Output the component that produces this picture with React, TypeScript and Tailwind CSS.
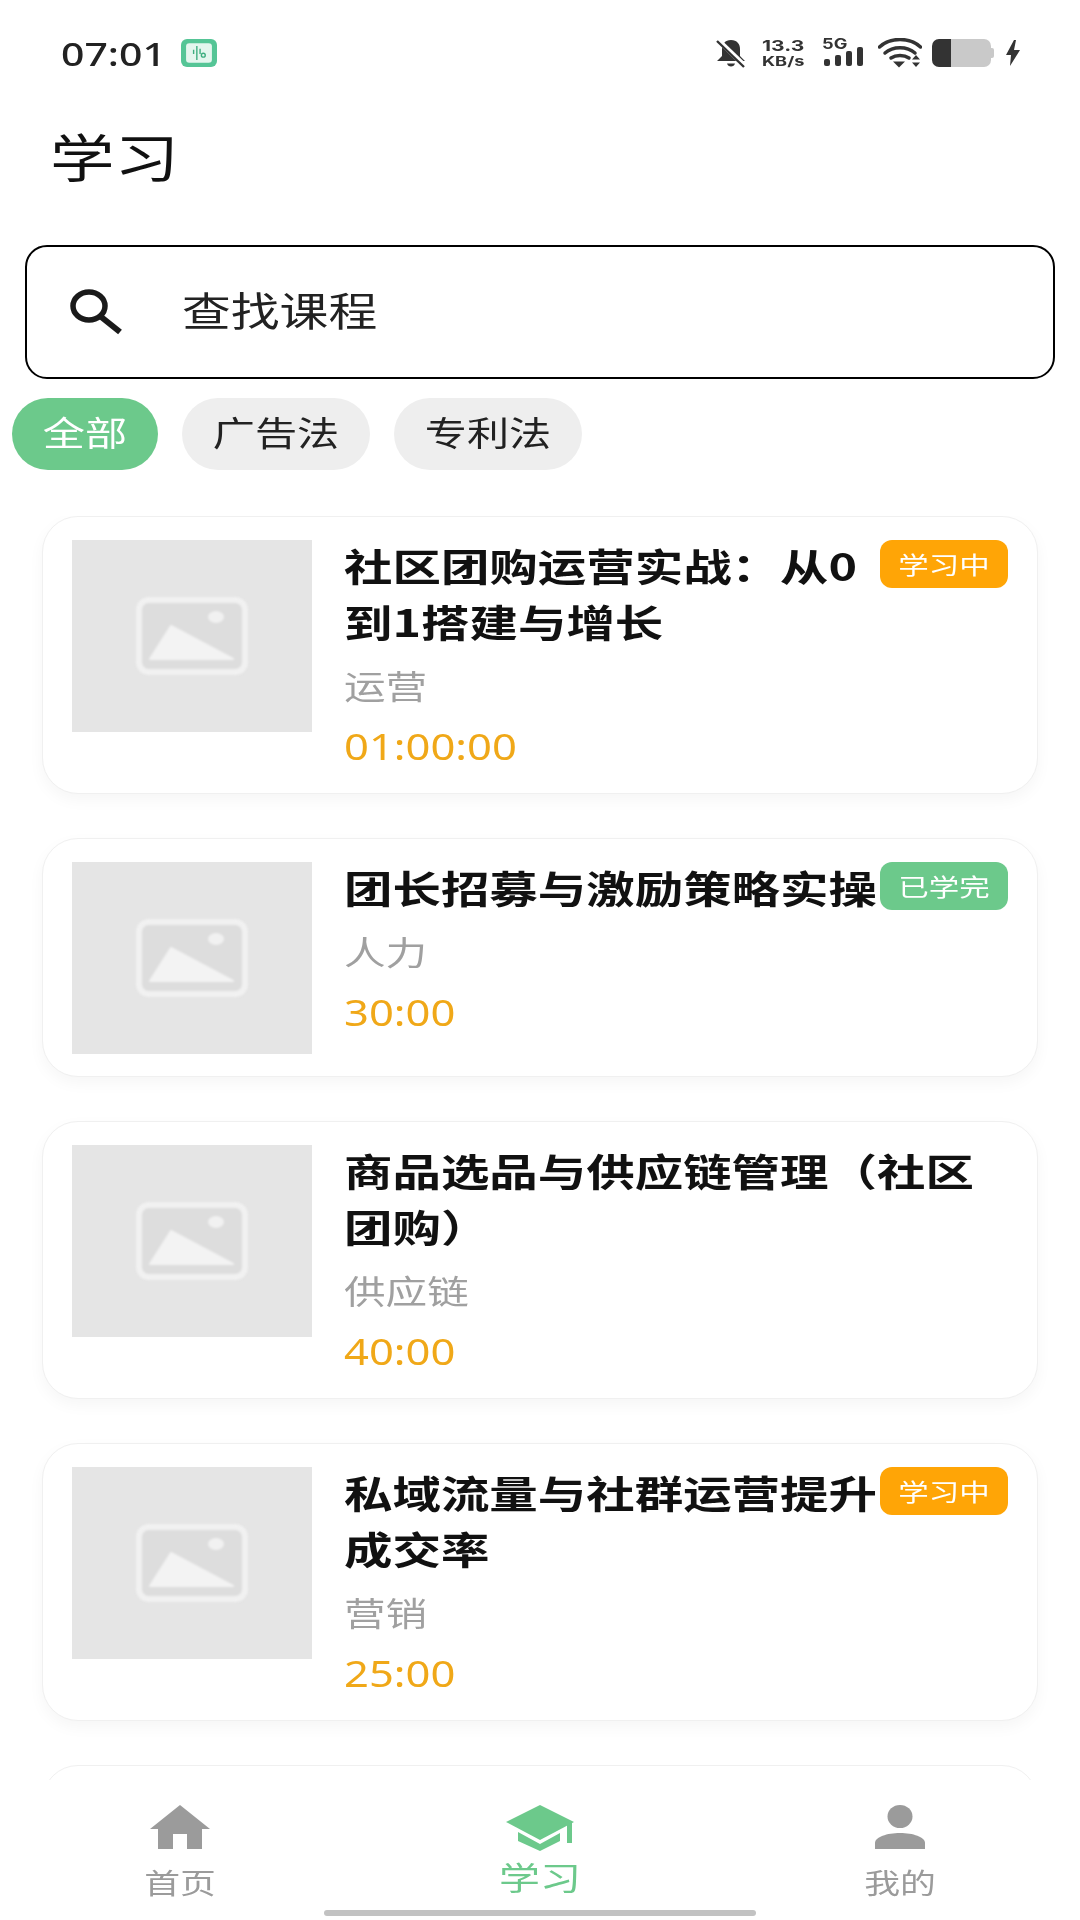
const courses = [
  { title: ["社区团购运营实战：从0", "到1搭建与增长"], category: "运营", time: "01:00:00", status: "学习中" },
  { title: ["团长招募与激励策略实操"], category: "人力", time: "30:00", status: "已学完" },
  { title: ["商品选品与供应链管理（社区", "团购）"], category: "供应链", time: "40:00", status: "" },
  { title: ["私域流量与社群运营提升", "成交率"], category: "营销", time: "25:00", status: "学习中" },
]

const cjk = "font-['Noto_Sans_CJK_SC','Noto_Sans',sans-serif]"

function StatusBar() {
  return (
    <div className="flex h-[106px] items-center pl-[61px] pr-[60px]">
      <span className="mt-[2px] w-[120px] origin-left scale-x-[1.28] font-['Noto_Sans',sans-serif] text-[32px] font-medium leading-none text-[#222]">
        07:01
      </span>
      <div className="flex h-[28px] w-[36px] items-center justify-center rounded-[6px] bg-[#55c596]">
        <svg viewBox="0 0 26 20" className="h-[22px] w-[28px]" fill="none" stroke="#3fae80" strokeWidth="1.3">
          <rect x="1" y="1" width="24" height="18" rx="3" fill="#e4f6ee" stroke="none" />
          <path d="M11 3.500v13M8 7v4M14 6v5" />
          <circle cx="17" cy="12" r="1.800" />
        </svg>
      </div>
      <div className="ml-auto flex items-center">
        <svg viewBox="0 0 32 30" className="h-[30px] w-[32px]">
          <path d="M16 2c-6 0-9 4-9 9v7l-5 5h28l-5-5v-7c0-5-3-9-9-9z" fill="#333" />
          <path d="M12 25.500h8c-.5 2-2 3-4 3s-3.500-1-4-3z" fill="#333" />
          <path d="M3 2l27 26" stroke="#fff" strokeWidth="5" />
          <path d="M2 3l27 26" stroke="#333" strokeWidth="2.400" />
        </svg>
        <div className="ml-[15px] flex w-[44px] flex-col items-start font-['Inter',sans-serif] text-[#333]">
          <span className="origin-left scale-x-[1.4] text-[15px] font-bold leading-[16px]">13.3</span>
          <span className="origin-left scale-x-[1.4] text-[13px] font-bold leading-[14px]">KB/s</span>
        </div>
        <div className="ml-[16px] flex h-[30px] w-[44px] flex-col">
          <span className="h-[12px] origin-left scale-x-[1.3] font-['Inter',sans-serif] text-[14px] font-bold leading-[12px] text-[#333]">5G</span>
          <svg viewBox="0 0 44 18" className="h-[18px] w-[44px] overflow-visible">
            <rect x="2" y="9" width="6" height="7" rx="2" fill="#333" />
            <rect x="13" y="5" width="6" height="11" rx="2" fill="#333" />
            <rect x="24" y="1" width="6" height="15" rx="2" fill="#333" />
            <rect x="35" y="-3" width="6" height="19" rx="2" fill="#333" />
          </svg>
        </div>
        <svg viewBox="0 0 44 30" className="ml-[12px] h-[30px] w-[44px]" fill="none" stroke="#333" strokeWidth="3.500" strokeLinecap="round">
          <path d="M1.500 9C12 -1 32 -1 42.500 9" />
          <path d="M7 15c8-7 22-7 30 0" />
          <path d="M13 20c5-3.500 13-3.500 18 0" />
          <path d="M15 23.500h12l-6 6z" fill="#333" stroke="none" />
          <path d="M38 17l4 4.500h-8zM38 29l4-4.500h-8z" fill="#333" stroke="none" />
        </svg>
        <div className="ml-[10px] flex h-[28px] w-[63px] items-center">
          <div className="h-full w-[19px] rounded-l-[7px] bg-[#333]" />
          <div className="h-full w-[40px] rounded-r-[7px] bg-[#c9c9c9]" />
          <div className="h-[10px] w-[3px] rounded-r-[2px] bg-[#c9c9c9]" />
        </div>
        <svg viewBox="0 0 14 26" className="ml-[11px] h-[26px] w-[14px]">
          <path d="M8 0L0 15h5l-1 11 10-16H8l2-10z" fill="#333" />
        </svg>
      </div>
    </div>
  )
}

function SearchBox() {
  return (
    <div className="mx-[25px] flex h-[134px] items-center rounded-[22px] border-2 border-black bg-white pl-[43px]">
      <svg viewBox="0 0 52 46" className="h-[46px] w-[52px]" fill="none" stroke="#1a1a1a" strokeWidth="5.500">
        <ellipse cx="19" cy="17" rx="16" ry="14" />
        <path d="M30 27l20 16" strokeWidth="6" />
      </svg>
      <span className={`mb-[6px] ml-[60px] origin-left scale-x-[1.22] text-[40px] leading-none text-[#222] ${cjk}`}>查找课程</span>
    </div>
  )
}

function FilterChips() {
  return (
    <div className="mt-[19px] flex gap-[24px] pl-[12px]">
      <div className="flex h-[72px] w-[146px] items-center justify-center rounded-full bg-[#6cc98b] pb-[4px] text-white">
        <span className={`scale-x-[1.24] text-[34px] leading-none ${cjk}`}>全部</span>
      </div>
      <div className="flex h-[72px] w-[188px] items-center justify-center rounded-full bg-[#eeeeee] pb-[4px] text-[#222]">
        <span className={`scale-x-[1.24] text-[34px] leading-none ${cjk}`}>广告法</span>
      </div>
      <div className="flex h-[72px] w-[188px] items-center justify-center rounded-full bg-[#eeeeee] pb-[4px] text-[#222]">
        <span className={`scale-x-[1.24] text-[34px] leading-none ${cjk}`}>专利法</span>
      </div>
    </div>
  )
}

function Thumb() {
  return (
    <div className="mb-[5px] mt-[2px] flex h-[192px] w-[240px] shrink-0 items-center justify-center bg-[#e5e5e5]">
      <svg viewBox="0 0 112 78" className="h-[78px] w-[112px] blur-[1px]">
        <rect x="3" y="3" width="106" height="72" rx="10" fill="#dddddd" stroke="#f1f1f1" strokeWidth="6" />
        <ellipse cx="80" cy="20" rx="8" ry="6" fill="#f1f1f1" />
        <path d="M14 62L35 29l62 33z" fill="#f3f3f3" stroke="#f3f3f3" strokeWidth="2" strokeLinejoin="round" />
      </svg>
    </div>
  )
}

function CourseCard({ course }: { course: (typeof courses)[number] }) {
  return (
    <div className="flex shrink-0 rounded-[36px] border border-[#f0f0f0] bg-white pb-[17px] pl-[29px] pr-[29px] pt-[21px] shadow-[0_6px_16px_rgba(0,0,0,0.04)]">
      <Thumb />
      <div className={`-mt-[1px] ml-[32px] min-w-0 flex-1 pb-[1px] ${cjk}`}>
        {course.title.map((line) => (
          <div key={line} className="h-[56px] origin-left scale-x-[1.275] whitespace-nowrap text-[38px] font-bold leading-[56px] text-[#111]">
            {line}
          </div>
        ))}
        <div className="mt-[8px] h-[56px] origin-left scale-x-[1.26] text-[33px] leading-[56px] text-[#a0a0a0]">
          {course.category}
        </div>
        <div className="mt-[6px] h-[56px] origin-left scale-x-[1.21] font-['Noto_Sans',sans-serif] text-[36px] leading-[56px] text-[#f0a818]">
          {course.time}
        </div>
      </div>
      {course.status && (
        <div
          className={`mt-[2px] flex h-[48px] w-[128px] shrink-0 items-center justify-center rounded-[12px] text-white ${
            course.status === "学习中" ? "bg-[#ffa506]" : "bg-[#6cc98b]"
          }`}
        >
          <span className={`scale-x-[1.27] text-[24px] leading-none ${cjk}`}>{course.status}</span>
        </div>
      )}
    </div>
  )
}

function BottomNav() {
  return (
    <div className={`relative z-10 h-[140px] shrink-0 bg-white ${cjk}`}>
      <div className="flex h-[130px] justify-between pl-[146px] pr-[146px] pt-[25px]">
        <div className="flex w-[68px] flex-col items-center">
          <svg viewBox="0 0 60 44" className="h-[44px] w-[60px]">
            <path d="M30 0l30 24h-8v20H37V29H23v15H8V24H0z" fill="#9b9b9b" />
          </svg>
          <span className="mt-[13px] scale-x-[1.28] text-[28px] leading-[40px] text-[#9b9b9b]">首页</span>
        </div>
        <div className="flex w-[68px] flex-col items-center">
          <svg viewBox="0 0 68 46" className="h-[46px] w-[68px]">
            <path d="M34 0l34 17-34 18L0 17z" fill="#6cc98b" />
            <path d="M12 27l22 12 20-11v8L34 46 12 36z" fill="#6cc98b" />
            <rect x="61" y="18" width="5" height="20" fill="#6cc98b" />
          </svg>
          <span className="mt-[5px] scale-x-[1.28] text-[32px] leading-[40px] text-[#6cc98b]">学习</span>
        </div>
        <div className="flex w-[68px] flex-col items-center">
          <svg viewBox="0 0 50 44" className="h-[44px] w-[50px]">
            <ellipse cx="25" cy="11.500" rx="12.500" ry="11.500" fill="#9b9b9b" />
            <path d="M0 44v-6c0-6 12-10 25-10s25 4 25 10v6z" fill="#9b9b9b" />
          </svg>
          <span className="mt-[13px] scale-x-[1.28] text-[28px] leading-[40px] text-[#9b9b9b]">我的</span>
        </div>
      </div>
      <div className="mx-auto h-[6px] w-[432px] rounded-full bg-[#c2c2c2]" />
    </div>
  )
}

export default function App() {
  return (
    <div className="flex h-[1920px] w-[1080px] flex-col overflow-hidden bg-white">
      <StatusBar />
      <h1 className={`ml-[50px] mt-[15px] h-[70px] origin-left scale-x-[1.24] text-[52px] font-normal leading-[70px] text-[#111] ${cjk}`}>
        学习
      </h1>
      <div className="h-[54px] shrink-0" />
      <SearchBox />
      <FilterChips />
      <div className="mt-[46px] flex min-h-0 flex-1 flex-col gap-[44px] overflow-hidden px-[42px]">
        {courses.map((course) => (
          <CourseCard key={course.title[0]} course={course} />
        ))}
        {/* next card, only its top edge shows above the tab bar */}
        <div className="h-[240px] shrink-0 rounded-[36px] border border-[#f0f0f0] bg-white" />
      </div>
      <BottomNav />
    </div>
  )
}
